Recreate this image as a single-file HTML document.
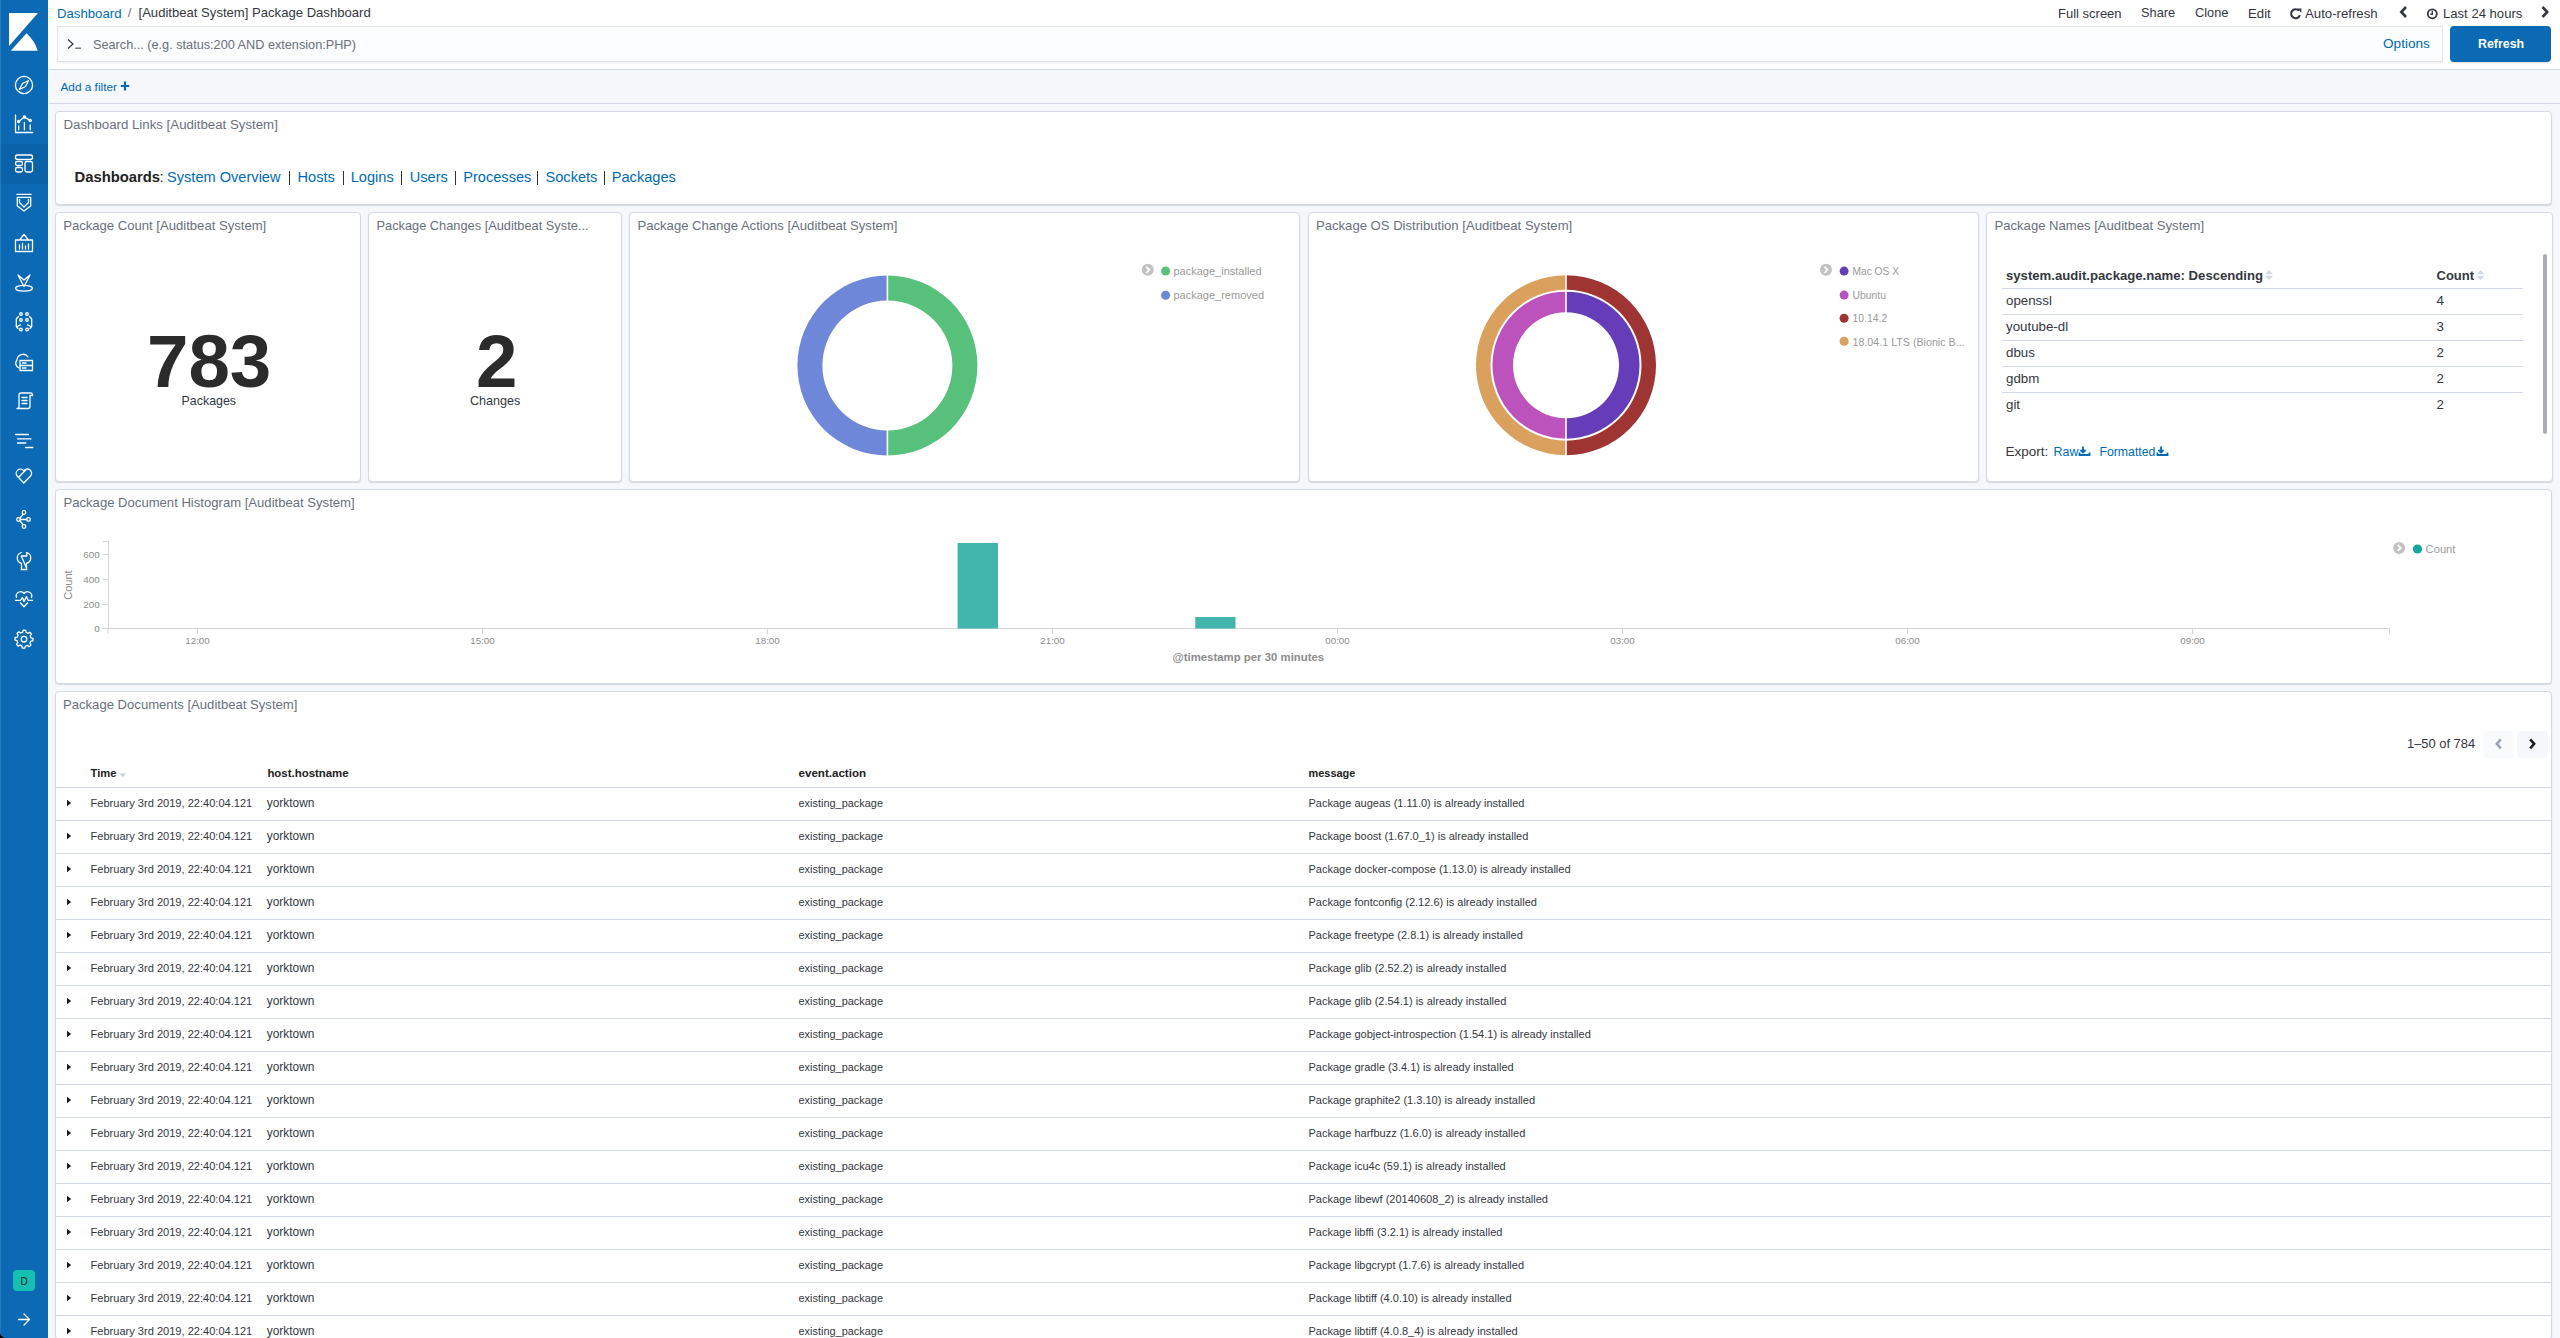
<!DOCTYPE html>
<html><head><meta charset="utf-8">
<style>
*{box-sizing:border-box;margin:0;padding:0}
html,body{width:2560px;height:1338px;overflow:hidden;background:#F5F7FA;font-family:"Liberation Sans",sans-serif;color:#343741}
.abs{position:absolute}
svg.abs{overflow:visible}
.t{position:absolute;white-space:nowrap;line-height:1}
</style></head><body>
<div class="abs" style="left:0;top:0;width:48px;height:1338px;background:#0B6AB3"></div>
<div class="abs" style="left:0px;top:144px;width:48px;height:40px;background:#0A62A8"></div>
<div class="abs" style="left:48px;top:0px;width:1px;height:1338px;background:#fff"></div>
<div class="abs" style="left:0px;top:0px;width:1px;height:1338px;background:rgba(255,255,255,.12)"></div>
<svg class="abs" style="left:0;top:0" width="48" height="60"><polygon points="9,13 38,13 9,46" fill="#fff"/><path d="M10.8,50.7 L26.5,33.2 Q35,41 37.7,50.7 Z" fill="#fff"/></svg>
<svg class="abs" style="left:0;top:0" width="48" height="700"><circle cx="24" cy="85" r="8.6" stroke="#fff" stroke-width="1.3" fill="none" stroke-linecap="round" stroke-linejoin="round"/><path d="M28.5,80.5 L25.5,86.5 L19.5,89.5 L22.5,83.5 Z" stroke="#fff" stroke-width="1.3" fill="none" stroke-linecap="round" stroke-linejoin="round"/><path d="M15.5,115 V132.5 H32.7" stroke="#fff" stroke-width="1.3" fill="none" stroke-linecap="round" stroke-linejoin="round"/><path d="M18.7,121.6 L24.4,117.1 L30.2,120.4" stroke="#fff" stroke-width="1.3" fill="none" stroke-linecap="round" stroke-linejoin="round"/><circle cx="18.7" cy="121.6" r="1.1" stroke="#fff" stroke-width="1.3" fill="none" stroke-linecap="round" stroke-linejoin="round"/><circle cx="24.4" cy="117.1" r="1.1" stroke="#fff" stroke-width="1.3" fill="none" stroke-linecap="round" stroke-linejoin="round"/><circle cx="30.2" cy="120.4" r="1.1" stroke="#fff" stroke-width="1.3" fill="none" stroke-linecap="round" stroke-linejoin="round"/><path d="M18.7,126 V129.8 M24.4,122.5 V129.8 M30.2,125 V129.8" stroke="#fff" stroke-width="1.3" fill="none" stroke-linecap="round" stroke-linejoin="round"/><rect x="15.5" y="155" width="17" height="4.5" rx="2" stroke="#fff" stroke-width="1.3" fill="none" stroke-linecap="round" stroke-linejoin="round"/><rect x="15.5" y="161.5" width="7" height="4" rx="1.8" stroke="#fff" stroke-width="1.3" fill="none" stroke-linecap="round" stroke-linejoin="round"/><rect x="15.5" y="167.5" width="7" height="4.5" rx="1.8" stroke="#fff" stroke-width="1.3" fill="none" stroke-linecap="round" stroke-linejoin="round"/><rect x="25" y="161.5" width="7.5" height="10.5" rx="1.8" stroke="#fff" stroke-width="1.3" fill="none" stroke-linecap="round" stroke-linejoin="round"/><path d="M17,194.4 H31 M17.3,197.3 H30.7 V206 L24,211 L17.3,206 Z M19.5,199.5 V202.5 L24,207 L28.5,202.5 V199.5" stroke="#fff" stroke-width="1.3" fill="none" stroke-linecap="round" stroke-linejoin="round"/><path d="M15.5,240 H32.5 V251.5 H15.5 Z M19.5,240 L24,234.5 L28.5,240" stroke="#fff" stroke-width="1.3" fill="none" stroke-linecap="round" stroke-linejoin="round"/><path d="M19.5,249 V245 M22.5,249 V243.5 M25.5,249 V246 M28.5,249 V244" stroke="#fff" stroke-width="1.3" fill="none" stroke-linecap="round" stroke-linejoin="round"/><ellipse cx="24" cy="288.3" rx="8.4" ry="2.9" stroke="#fff" stroke-width="1.3" fill="none" stroke-linecap="round" stroke-linejoin="round"/><path d="M18,275 L24,280 L30,275 L24,286.5 Z" fill="#0B6AB3" stroke="#fff" stroke-width="1.3" fill="none" stroke-linecap="round" stroke-linejoin="round"/><circle cx="21" cy="314" r="1.3" stroke="#fff" stroke-width="1.3" fill="none" stroke-linecap="round" stroke-linejoin="round"/><circle cx="27" cy="314" r="1.3" stroke="#fff" stroke-width="1.3" fill="none" stroke-linecap="round" stroke-linejoin="round"/><circle cx="21" cy="320" r="1.3" stroke="#fff" stroke-width="1.3" fill="none" stroke-linecap="round" stroke-linejoin="round"/><circle cx="27" cy="320" r="1.3" stroke="#fff" stroke-width="1.3" fill="none" stroke-linecap="round" stroke-linejoin="round"/><circle cx="21" cy="329.5" r="1.3" stroke="#fff" stroke-width="1.3" fill="none" stroke-linecap="round" stroke-linejoin="round"/><circle cx="27" cy="329.5" r="1.3" stroke="#fff" stroke-width="1.3" fill="none" stroke-linecap="round" stroke-linejoin="round"/><path d="M18.5,316.5 L16.3,319 V326.5 L18,328.5 M29.5,316.5 L31.7,319 V326.5 L30,328.5 M16.5,327 L20.5,324.8 M31.5,327 L27.5,324.8" stroke="#fff" stroke-width="1.3" fill="none" stroke-linecap="round" stroke-linejoin="round"/><path d="M19,368 A5,5 0 0 1 17,360 A6,6 0 0 1 28,357" stroke="#fff" stroke-width="1.3" fill="none" stroke-linecap="round" stroke-linejoin="round"/><rect x="20" y="360.5" width="12.5" height="10" stroke="#fff" stroke-width="1.3" fill="none" stroke-linecap="round" stroke-linejoin="round"/><path d="M20,365.5 H32.5 M22.5,363 H26 M22.5,368 H26" stroke="#fff" stroke-width="1.3" fill="none" stroke-linecap="round" stroke-linejoin="round"/><path d="M17,408.5 H28 A2,2 0 0 0 30,406.5 V395.5 H32.5 A2,2 0 0 0 30,393 H21 A2,2 0 0 0 19,395 V406 A2,2 0 0 1 17,408.5 Z M22,397.5 H27 M22,400.5 H27 M22,403.5 H27" stroke="#fff" stroke-width="1.3" fill="none" stroke-linecap="round" stroke-linejoin="round"/><path d="M15.5,434.5 H28.5 M17.5,438.8 H31 M17.5,443 H25.8 M25.5,447.5 H32.8" stroke="#fff" stroke-width="1.3" fill="none" stroke-linecap="round" stroke-linejoin="round"/><path d="M23.8,483 L17,475.8 A3.6,3.6 0 0 1 23.8,470.8 A3.6,3.6 0 0 1 30.8,475.8 Z M18.7,477.2 L26,469.8" stroke="#fff" stroke-width="1.3" fill="none" stroke-linecap="round" stroke-linejoin="round"/><circle cx="24" cy="512.5" r="1.8" stroke="#fff" stroke-width="1.3" fill="none" stroke-linecap="round" stroke-linejoin="round"/><circle cx="18.5" cy="519.5" r="1.8" stroke="#fff" stroke-width="1.3" fill="none" stroke-linecap="round" stroke-linejoin="round"/><circle cx="28.5" cy="519.5" r="1.8" stroke="#fff" stroke-width="1.3" fill="none" stroke-linecap="round" stroke-linejoin="round"/><circle cx="24" cy="526.5" r="1.8" stroke="#fff" stroke-width="1.3" fill="none" stroke-linecap="round" stroke-linejoin="round"/><path d="M20.3,519.5 H26.7 M23,514.5 L20,518 M20,521 L23,524.5" stroke="#fff" stroke-width="1.3" fill="none" stroke-linecap="round" stroke-linejoin="round"/><path d="M21.3,552.5 A5.6,5.6 0 0 0 21.5,563.3 V568 M26.5,568 V563.3 A5.6,5.6 0 0 0 26.7,552.5 V556 H21.3 Z M21,569.5 H27" stroke="#fff" stroke-width="1.3" fill="none" stroke-linecap="round" stroke-linejoin="round"/><path d="M16.5,597.5 A4.3,4.3 0 0 1 24,593.5 A4.3,4.3 0 0 1 31.5,597.5 M15.5,600.3 H20.5 L22.5,597.5 L24,601.5 L26.5,596.5 L28,600.3 H32.5 M20.5,603 L24,606.8 L27.5,603" stroke="#fff" stroke-width="1.3" fill="none" stroke-linecap="round" stroke-linejoin="round"/><polygon points="33.00,639.20 32.96,640.08 32.83,640.96 30.70,641.23 30.47,641.88 30.17,642.50 29.82,643.09 30.96,644.91 30.36,645.56 29.71,646.16 29.00,646.68 27.30,645.37 26.68,645.67 26.03,645.90 25.37,646.07 24.88,648.16 24.00,648.20 23.12,648.16 22.24,648.03 21.97,645.90 21.32,645.67 20.70,645.37 20.11,645.02 18.29,646.16 17.64,645.56 17.04,644.91 16.52,644.20 17.83,642.50 17.53,641.88 17.30,641.23 17.13,640.57 15.04,640.08 15.00,639.20 15.04,638.32 15.17,637.44 17.30,637.17 17.53,636.52 17.83,635.90 18.18,635.31 17.04,633.49 17.64,632.84 18.29,632.24 19.00,631.72 20.70,633.03 21.32,632.73 21.97,632.50 22.63,632.33 23.12,630.24 24.00,630.20 24.88,630.24 25.76,630.37 26.03,632.50 26.68,632.73 27.30,633.03 27.89,633.38 29.71,632.24 30.36,632.84 30.96,633.49 31.48,634.20 30.17,635.90 30.47,636.52 30.70,637.17 30.87,637.83 32.96,638.32" stroke="#fff" stroke-width="1.3" fill="none" stroke-linecap="round" stroke-linejoin="round"/><circle cx="24" cy="639.2" r="2.8" stroke="#fff" stroke-width="1.3" fill="none" stroke-linecap="round" stroke-linejoin="round"/></svg>
<div class="abs" style="left:13px;top:1270px;width:22px;height:21px;background:#16BFB0;border-radius:4px"></div>
<div class="t" style="left:20.50px;top:1277.24px;font-size:10px;color:#1a1c21;">D</div>
<svg class="abs" style="left:0;top:1300" width="48" height="30"><path d="M18.5,19.5 H29.5 M24,14 L29.5,19.5 L24,25" stroke="#fff" stroke-width="1.3" fill="none" stroke-linecap="round" stroke-linejoin="round"/></svg>
<svg class="abs" style="left:0;top:1332" width="6" height="6"><path d="M0,0 A6,6 0 0 0 6,6 H0 Z" fill="#000"/></svg>
<div class="abs" style="left:49px;top:0px;width:2511px;height:69px;background:#fff"></div>
<div class="abs" style="left:49px;top:69px;width:2511px;height:1px;background:#D3DAE6"></div>
<div class="t" style="left:57.00px;top:6.53px;font-size:13.2px;color:#006BB4;">Dashboard</div>
<div class="t" style="left:127.70px;top:6.20px;font-size:13px;color:#69707D;">/</div>
<div class="t" style="left:138.50px;top:6.11px;font-size:13.1px;color:#343741;">[Auditbeat System] Package Dashboard</div>
<div class="t" style="left:2058.00px;top:7.30px;font-size:13px;color:#343741;">Full screen</div>
<div class="t" style="left:2141.00px;top:7.46px;font-size:12.8px;color:#343741;">Share</div>
<div class="t" style="left:2195.00px;top:7.46px;font-size:12.8px;color:#343741;">Clone</div>
<div class="t" style="left:2248.00px;top:7.13px;font-size:13.2px;color:#343741;">Edit</div>
<div class="t" style="left:2305.00px;top:7.13px;font-size:13.2px;color:#343741;">Auto-refresh</div>
<div class="t" style="left:2443.00px;top:7.21px;font-size:13.1px;color:#343741;">Last 24 hours</div>
<svg class="abs" style="left:0;top:0" width="2560" height="30"><path d="M2299.9,15.2 A4.5,4.5 0 1 1 2298.9,10.6" stroke="#343741" stroke-width="2.1" fill="none"/><path d="M2297.2,8.6 L2301.4,8.6 L2301.4,12.8 Z" fill="#343741"/><path d="M2406,7 L2401.3,12 L2406,17" stroke="#343741" stroke-width="2.6" fill="none"/><circle cx="2432.3" cy="13.8" r="4.5" stroke="#343741" stroke-width="1.8" fill="none"/><path d="M2432.3,11 V14.3 H2430.3" stroke="#343741" stroke-width="1.4" fill="none"/><path d="M2542.5,7 L2547.2,12 L2542.5,17" stroke="#343741" stroke-width="2.6" fill="none"/></svg>
<div class="abs" style="left:57px;top:26px;width:2386px;height:36px;background:#FBFCFD;border:1px solid #E2E4E8;box-shadow:0 2px 2px -1px rgba(0,0,0,.08)"></div>
<svg class="abs" style="left:60;top:35" width="30" height="20"><path d="M8,4.5 L13,9 L8,13.5" stroke="#343741" stroke-width="1.2" fill="none"/><rect x="15.2" y="12.5" width="5.8" height="1.5" fill="#777"/></svg>
<div class="t" style="left:93.00px;top:38.95px;font-size:12.7px;color:#69707D;">Search... (e.g. status:200 AND extension:PHP)</div>
<div class="t" style="left:2383.00px;top:37.19px;font-size:13.6px;color:#006BB4;">Options</div>
<div class="abs" style="left:2450px;top:26px;width:101px;height:36px;background:#0B6AB3;border-radius:4px;box-shadow:0 2px 2px -1px rgba(0,0,0,.15)"></div>
<div class="t" style="left:2478.00px;top:38.20px;font-size:12.4px;color:#fff;font-weight:bold;">Refresh</div>
<div class="abs" style="left:49px;top:70px;width:2511px;height:33px;background:#F5F7FA"></div>
<div class="abs" style="left:49px;top:103px;width:2511px;height:1px;background:#D3DAE6"></div>
<div class="t" style="left:60.50px;top:81.71px;font-size:11.8px;color:#006BB4;">Add a filter</div>
<svg class="abs" style="left:120;top:80" width="12" height="12"><path d="M5,1.5 V10.5 M0.8,6 H9.2" stroke="#006BB4" stroke-width="2.2"/></svg>
<div class="abs" style="left:55px;top:111px;width:2497px;height:94px;background:#fff;border:1px solid #D3DAE6;border-radius:4px;box-shadow:0 1px 1px rgba(152,162,179,.35)"></div>
<div class="t" style="left:63.50px;top:118.18px;font-size:13.25px;color:#69707D;">Dashboard Links [Auditbeat System]</div>
<div class="t" style="left:74.50px;top:170.17px;font-size:14.8px;color:#222;font-weight:bold;">Dashboards</div>
<div class="t" style="left:159.50px;top:170.26px;font-size:14.7px;color:#222;">:</div>
<div class="t" style="left:167.00px;top:170.34px;font-size:14.6px;color:#006BB4;">System Overview</div>
<div class="t" style="left:297.50px;top:170.34px;font-size:14.6px;color:#006BB4;">Hosts</div>
<div class="t" style="left:350.75px;top:170.34px;font-size:14.6px;color:#006BB4;">Logins</div>
<div class="t" style="left:409.75px;top:170.34px;font-size:14.6px;color:#006BB4;">Users</div>
<div class="t" style="left:463.25px;top:170.34px;font-size:14.6px;color:#006BB4;">Processes</div>
<div class="t" style="left:545.50px;top:170.34px;font-size:14.6px;color:#006BB4;">Sockets</div>
<div class="t" style="left:611.75px;top:170.34px;font-size:14.6px;color:#006BB4;">Packages</div>
<div class="abs" style="left:288.5px;top:171px;width:1.3px;height:14px;background:#333"></div>
<div class="abs" style="left:342.5px;top:171px;width:1.3px;height:14px;background:#333"></div>
<div class="abs" style="left:401.0px;top:171px;width:1.3px;height:14px;background:#333"></div>
<div class="abs" style="left:454.5px;top:171px;width:1.3px;height:14px;background:#333"></div>
<div class="abs" style="left:537.0px;top:171px;width:1.3px;height:14px;background:#333"></div>
<div class="abs" style="left:603.5px;top:171px;width:1.3px;height:14px;background:#333"></div>
<div class="abs" style="left:55px;top:212px;width:306px;height:270px;background:#fff;border:1px solid #D3DAE6;border-radius:4px;box-shadow:0 1px 1px rgba(152,162,179,.35)"></div>
<div class="t" style="left:63.20px;top:219.01px;font-size:13.1px;color:#69707D;">Package Count [Auditbeat System]</div>
<div class="t" style="left:147.00px;top:324.94px;font-size:74.5px;color:#2B2B2B;font-weight:bold;">783</div>
<div class="t" style="left:181.60px;top:395.00px;font-size:12.4px;color:#343741;">Packages</div>
<div class="abs" style="left:368px;top:212px;width:254px;height:270px;background:#fff;border:1px solid #D3DAE6;border-radius:4px;box-shadow:0 1px 1px rgba(152,162,179,.35)"></div>
<div class="t" style="left:376.50px;top:219.76px;font-size:12.8px;color:#69707D;">Package Changes [Auditbeat Syste...</div>
<div class="t" style="left:476.00px;top:324.94px;font-size:74.5px;color:#2B2B2B;font-weight:bold;">2</div>
<div class="t" style="left:470.00px;top:394.83px;font-size:12.6px;color:#343741;">Changes</div>
<div class="abs" style="left:629px;top:212px;width:671px;height:270px;background:#fff;border:1px solid #D3DAE6;border-radius:4px;box-shadow:0 1px 1px rgba(152,162,179,.35)"></div>
<div class="t" style="left:637.50px;top:219.01px;font-size:13.1px;color:#69707D;">Package Change Actions [Auditbeat System]</div>
<div class="abs" style="left:1308px;top:212px;width:671px;height:270px;background:#fff;border:1px solid #D3DAE6;border-radius:4px;box-shadow:0 1px 1px rgba(152,162,179,.35)"></div>
<div class="t" style="left:1316.00px;top:219.01px;font-size:13.1px;color:#69707D;">Package OS Distribution [Auditbeat System]</div>
<div class="abs" style="left:1986px;top:212px;width:567px;height:270px;background:#fff;border:1px solid #D3DAE6;border-radius:4px;box-shadow:0 1px 1px rgba(152,162,179,.35)"></div>
<div class="t" style="left:1994.50px;top:219.01px;font-size:13.1px;color:#69707D;">Package Names [Auditbeat System]</div>
<div class="abs" style="left:55px;top:489px;width:2497px;height:195px;background:#fff;border:1px solid #D3DAE6;border-radius:4px;box-shadow:0 1px 1px rgba(152,162,179,.35)"></div>
<div class="t" style="left:63.50px;top:496.31px;font-size:13.1px;color:#69707D;">Package Document Histogram [Auditbeat System]</div>
<div class="abs" style="left:55px;top:691px;width:2497px;height:649px;background:#fff;border:1px solid #D3DAE6;border-radius:4px;box-shadow:0 1px 1px rgba(152,162,179,.35)"></div>
<div class="t" style="left:63.00px;top:697.81px;font-size:13.1px;color:#69707D;">Package Documents [Auditbeat System]</div>
<svg class="abs" style="left:0;top:0" width="2560" height="500"><path d="M887.40,275.50 A90,90 0 0 1 887.40,455.50 L887.40,430.50 A65,65 0 0 0 887.40,300.50 Z" fill="#57c17b"/><path d="M887.40,455.50 A90,90 0 0 1 887.40,275.50 L887.40,300.50 A65,65 0 0 0 887.40,430.50 Z" fill="#6f87d8"/><rect x="886.6" y="273.5" width="1.6" height="184" fill="#fff"/><path d="M1566.00,275.20 A90,90 0 0 1 1566.00,455.20 L1566.00,440.70 A75.5,75.5 0 0 0 1566.00,289.70 Z" fill="#9e3533"/><path d="M1566.00,455.20 A90,90 0 0 1 1566.00,275.20 L1566.00,289.70 A75.5,75.5 0 0 0 1566.00,440.70 Z" fill="#daa05d"/><path d="M1566.00,291.70 A73.5,73.5 0 0 1 1566.00,438.70 L1566.00,418.20 A53,53 0 0 0 1566.00,312.20 Z" fill="#663db8"/><path d="M1566.00,438.70 A73.5,73.5 0 0 1 1566.00,291.70 L1566.00,312.20 A53,53 0 0 0 1566.00,418.20 Z" fill="#bc52bc"/><rect x="1565.2" y="273.2" width="1.6" height="184" fill="#fff"/><circle cx="1147.75" cy="269.8" r="6" fill="#C2C2C2"/><path d="M1146.15,266.8 L1149.35,269.8 L1146.15,272.8" stroke="#fff" stroke-width="1.8" fill="none"/><circle cx="1165.6" cy="271" r="4.5" fill="#57c17b"/><circle cx="1165.6" cy="295.2" r="4.5" fill="#6f87d8"/><circle cx="1826" cy="269.8" r="6" fill="#C2C2C2"/><path d="M1824.4,266.8 L1827.6,269.8 L1824.4,272.8" stroke="#fff" stroke-width="1.8" fill="none"/><circle cx="1844.1" cy="271.1" r="4.5" fill="#663db8"/><circle cx="1844.1" cy="295.1" r="4.5" fill="#bc52bc"/><circle cx="1844.1" cy="318.2" r="4.5" fill="#9e3533"/><circle cx="1844.1" cy="341.2" r="4.5" fill="#daa05d"/></svg>
<div class="t" style="left:1173.50px;top:266.09px;font-size:11px;color:#9a9a9a;">package_installed</div>
<div class="t" style="left:1173.50px;top:290.09px;font-size:11px;color:#9a9a9a;">package_removed</div>
<div class="t" style="left:1852.50px;top:266.87px;font-size:10.2px;color:#9a9a9a;">Mac OS X</div>
<div class="t" style="left:1852.50px;top:290.80px;font-size:10.4px;color:#9a9a9a;">Ubuntu</div>
<div class="t" style="left:1852.50px;top:313.90px;font-size:10.4px;color:#9a9a9a;">10.14.2</div>
<div class="t" style="left:1852.50px;top:336.64px;font-size:10.7px;color:#9a9a9a;">18.04.1 LTS (Bionic B...</div>
<div class="t" style="left:2006.00px;top:268.77px;font-size:13.15px;color:#343741;font-weight:bold;">system.audit.package.name: Descending</div>
<div class="t" style="left:2436.50px;top:268.90px;font-size:13.0px;color:#343741;font-weight:bold;">Count</div>
<svg class="abs" style="left:0;top:0" width="2560" height="500"><path d="M2265,274.2 L2269,270 L2273,274.2 Z M2265,275.8 L2269,280 L2273,275.8 Z" fill="#D3DAE6"/><path d="M2476.5,274.2 L2480.5,270 L2484.5,274.2 Z M2476.5,275.8 L2480.5,280 L2484.5,275.8 Z" fill="#D3DAE6"/></svg>
<div class="abs" style="left:2002px;top:288px;width:521px;height:1px;background:#D3DAE6"></div>
<div class="abs" style="left:2002px;top:314px;width:521px;height:1px;background:#D3DAE6"></div>
<div class="abs" style="left:2002px;top:340px;width:521px;height:1px;background:#D3DAE6"></div>
<div class="abs" style="left:2002px;top:366px;width:521px;height:1px;background:#D3DAE6"></div>
<div class="abs" style="left:2002px;top:392px;width:521px;height:1px;background:#D3DAE6"></div>
<div class="t" style="left:2006.00px;top:294.44px;font-size:13.3px;color:#343741;">openssl</div>
<div class="t" style="left:2436.50px;top:294.44px;font-size:13.3px;color:#343741;">4</div>
<div class="t" style="left:2006.00px;top:320.44px;font-size:13.3px;color:#343741;">youtube-dl</div>
<div class="t" style="left:2436.50px;top:320.44px;font-size:13.3px;color:#343741;">3</div>
<div class="t" style="left:2006.00px;top:346.44px;font-size:13.3px;color:#343741;">dbus</div>
<div class="t" style="left:2436.50px;top:346.44px;font-size:13.3px;color:#343741;">2</div>
<div class="t" style="left:2006.00px;top:372.44px;font-size:13.3px;color:#343741;">gdbm</div>
<div class="t" style="left:2436.50px;top:372.44px;font-size:13.3px;color:#343741;">2</div>
<div class="t" style="left:2006.00px;top:398.44px;font-size:13.3px;color:#343741;">git</div>
<div class="t" style="left:2436.50px;top:398.44px;font-size:13.3px;color:#343741;">2</div>
<div class="abs" style="left:2543px;top:254px;width:4px;height:180px;background:#A9AEB8;border-radius:2px"></div>
<div class="t" style="left:2005.60px;top:445.07px;font-size:13.5px;color:#343741;">Export:</div>
<div class="t" style="left:2053.60px;top:446.00px;font-size:12.4px;color:#006BB4;">Raw</div>
<div class="t" style="left:2099.40px;top:446.09px;font-size:12.3px;color:#006BB4;">Formatted</div>
<svg class="abs" style="left:0;top:0" width="2560" height="500"><path d="M2083.0,446.5 V452.0 M2080.5,450.0 L2083.0,452.5 L2085.5,450.0" stroke="#006BB4" stroke-width="1.8" fill="none"/><path d="M2079.5,452.5 V455.0 H2089.5 V452.5" stroke="#006BB4" stroke-width="1.8" fill="none"/><path d="M2161.0,446.5 V452.0 M2158.5,450.0 L2161.0,452.5 L2163.5,450.0" stroke="#006BB4" stroke-width="1.8" fill="none"/><path d="M2157.5,452.5 V455.0 H2167.5 V452.5" stroke="#006BB4" stroke-width="1.8" fill="none"/></svg>
<svg class="abs" style="left:0;top:0" width="2560" height="700"><path d="M103,541.5 H108.5 V628.5 H2389.5 V634 M103,554.5 H108.5 M103,579.5 H108.5 M103,604.5 H108.5 M103,628.5 H108.5 M108,628.5 V634" stroke="#D6D6D6" stroke-width="1" fill="none"/><path d="M197.5,628.5 V634" stroke="#D6D6D6" stroke-width="1"/><path d="M482.5,628.5 V634" stroke="#D6D6D6" stroke-width="1"/><path d="M767.5,628.5 V634" stroke="#D6D6D6" stroke-width="1"/><path d="M1052.5,628.5 V634" stroke="#D6D6D6" stroke-width="1"/><path d="M1337.5,628.5 V634" stroke="#D6D6D6" stroke-width="1"/><path d="M1622.5,628.5 V634" stroke="#D6D6D6" stroke-width="1"/><path d="M1907.5,628.5 V634" stroke="#D6D6D6" stroke-width="1"/><path d="M2192.5,628.5 V634" stroke="#D6D6D6" stroke-width="1"/><rect x="957.6" y="543" width="40.4" height="85.5" fill="#42B5AD"/><rect x="1195.3" y="617" width="40.2" height="11.5" fill="#42B5AD"/><circle cx="2399.2" cy="547.9" r="6" fill="#C2C2C2"/><path d="M2397.6,544.9 L2400.7999999999997,547.9 L2397.6,550.9" stroke="#fff" stroke-width="1.8" fill="none"/><circle cx="2417.5" cy="549" r="4.6" fill="#16A69B"/></svg>
<div class="t" style="right:2460.2px;top:550.02px;font-size:9.9px;color:#8c8c8c">600</div>
<div class="t" style="right:2460.2px;top:575.02px;font-size:9.9px;color:#8c8c8c">400</div>
<div class="t" style="right:2460.2px;top:599.92px;font-size:9.9px;color:#8c8c8c">200</div>
<div class="t" style="right:2460.2px;top:624.12px;font-size:9.9px;color:#8c8c8c">0</div>
<div class="t" style="left:157.5px;width:80px;text-align:center;top:636.20px;font-size:9.8px;color:#8c8c8c">12:00</div>
<div class="t" style="left:442.5px;width:80px;text-align:center;top:636.20px;font-size:9.8px;color:#8c8c8c">15:00</div>
<div class="t" style="left:727.5px;width:80px;text-align:center;top:636.20px;font-size:9.8px;color:#8c8c8c">18:00</div>
<div class="t" style="left:1012.5px;width:80px;text-align:center;top:636.20px;font-size:9.8px;color:#8c8c8c">21:00</div>
<div class="t" style="left:1297.5px;width:80px;text-align:center;top:636.20px;font-size:9.8px;color:#8c8c8c">00:00</div>
<div class="t" style="left:1582.5px;width:80px;text-align:center;top:636.20px;font-size:9.8px;color:#8c8c8c">03:00</div>
<div class="t" style="left:1867.5px;width:80px;text-align:center;top:636.20px;font-size:9.8px;color:#8c8c8c">06:00</div>
<div class="t" style="left:2152.5px;width:80px;text-align:center;top:636.20px;font-size:9.8px;color:#8c8c8c">09:00</div>
<div class="t" style="left:28.599999999999994px;top:579.3px;width:80px;height:12px;text-align:center;font-size:11px;color:#8c8c8c;transform:rotate(-90deg)">Count</div>
<div class="t" style="left:1148.4px;width:200px;text-align:center;top:651.55px;font-size:11.4px;font-weight:bold;color:#8c8c8c">@timestamp per 30 minutes</div>
<div class="t" style="left:2425.60px;top:544.22px;font-size:11.2px;color:#9a9a9a;">Count</div>
<div class="t" style="left:2407.00px;top:737.78px;font-size:12.9px;color:#343741;">1–50 of 784</div>
<div class="abs" style="left:2483px;top:731px;width:31px;height:27px;background:#F5F7FA;border-radius:4px;opacity:.6"></div>
<div class="abs" style="left:2517px;top:731px;width:31px;height:27px;background:#F5F7FA;border-radius:4px"></div>
<svg class="abs" style="left:0;top:0" width="2560" height="900"><path d="M2500.8,739.3 L2496.8,743.8 L2500.8,748.3" stroke="#98A2B3" stroke-width="2.5" fill="none"/><path d="M2530.2,739.3 L2534.2,743.8 L2530.2,748.3" stroke="#1a1c21" stroke-width="2.5" fill="none"/><path d="M119.5,773.5 L126,773.5 L122.75,777 Z" fill="#C9CFD9"/></svg>
<div class="t" style="left:90.50px;top:768.22px;font-size:11.2px;color:#222;font-weight:bold;">Time</div>
<div class="t" style="left:267.40px;top:768.02px;font-size:11.43px;color:#222;font-weight:bold;">host.hostname</div>
<div class="t" style="left:798.50px;top:767.90px;font-size:11.58px;color:#222;font-weight:bold;">event.action</div>
<div class="t" style="left:1308.50px;top:768.43px;font-size:10.95px;color:#222;font-weight:bold;">message</div>
<div class="abs" style="left:56px;top:787px;width:2495px;height:1px;background:#D3DAE6"></div>
<div class="t" style="left:90.50px;top:798.23px;font-size:11.07px;color:#343741;">February 3rd 2019, 22:40:04.121</div>
<div class="t" style="left:266.80px;top:797.53px;font-size:11.9px;color:#343741;">yorktown</div>
<div class="t" style="left:798.50px;top:798.33px;font-size:10.95px;color:#343741;">existing_package</div>
<div class="t" style="left:1308.50px;top:798.27px;font-size:11.02px;color:#343741;">Package augeas (1.11.0) is already installed</div>
<div class="abs" style="left:56px;top:820px;width:2495px;height:1px;background:#D3DAE6"></div>
<div class="t" style="left:90.50px;top:831.23px;font-size:11.07px;color:#343741;">February 3rd 2019, 22:40:04.121</div>
<div class="t" style="left:266.80px;top:830.53px;font-size:11.9px;color:#343741;">yorktown</div>
<div class="t" style="left:798.50px;top:831.33px;font-size:10.95px;color:#343741;">existing_package</div>
<div class="t" style="left:1308.50px;top:831.27px;font-size:11.02px;color:#343741;">Package boost (1.67.0_1) is already installed</div>
<div class="abs" style="left:56px;top:853px;width:2495px;height:1px;background:#D3DAE6"></div>
<div class="t" style="left:90.50px;top:864.23px;font-size:11.07px;color:#343741;">February 3rd 2019, 22:40:04.121</div>
<div class="t" style="left:266.80px;top:863.53px;font-size:11.9px;color:#343741;">yorktown</div>
<div class="t" style="left:798.50px;top:864.33px;font-size:10.95px;color:#343741;">existing_package</div>
<div class="t" style="left:1308.50px;top:864.27px;font-size:11.02px;color:#343741;">Package docker-compose (1.13.0) is already installed</div>
<div class="abs" style="left:56px;top:886px;width:2495px;height:1px;background:#D3DAE6"></div>
<div class="t" style="left:90.50px;top:897.23px;font-size:11.07px;color:#343741;">February 3rd 2019, 22:40:04.121</div>
<div class="t" style="left:266.80px;top:896.53px;font-size:11.9px;color:#343741;">yorktown</div>
<div class="t" style="left:798.50px;top:897.33px;font-size:10.95px;color:#343741;">existing_package</div>
<div class="t" style="left:1308.50px;top:897.27px;font-size:11.02px;color:#343741;">Package fontconfig (2.12.6) is already installed</div>
<div class="abs" style="left:56px;top:919px;width:2495px;height:1px;background:#D3DAE6"></div>
<div class="t" style="left:90.50px;top:930.23px;font-size:11.07px;color:#343741;">February 3rd 2019, 22:40:04.121</div>
<div class="t" style="left:266.80px;top:929.53px;font-size:11.9px;color:#343741;">yorktown</div>
<div class="t" style="left:798.50px;top:930.33px;font-size:10.95px;color:#343741;">existing_package</div>
<div class="t" style="left:1308.50px;top:930.27px;font-size:11.02px;color:#343741;">Package freetype (2.8.1) is already installed</div>
<div class="abs" style="left:56px;top:952px;width:2495px;height:1px;background:#D3DAE6"></div>
<div class="t" style="left:90.50px;top:963.23px;font-size:11.07px;color:#343741;">February 3rd 2019, 22:40:04.121</div>
<div class="t" style="left:266.80px;top:962.53px;font-size:11.9px;color:#343741;">yorktown</div>
<div class="t" style="left:798.50px;top:963.33px;font-size:10.95px;color:#343741;">existing_package</div>
<div class="t" style="left:1308.50px;top:963.27px;font-size:11.02px;color:#343741;">Package glib (2.52.2) is already installed</div>
<div class="abs" style="left:56px;top:985px;width:2495px;height:1px;background:#D3DAE6"></div>
<div class="t" style="left:90.50px;top:996.23px;font-size:11.07px;color:#343741;">February 3rd 2019, 22:40:04.121</div>
<div class="t" style="left:266.80px;top:995.53px;font-size:11.9px;color:#343741;">yorktown</div>
<div class="t" style="left:798.50px;top:996.33px;font-size:10.95px;color:#343741;">existing_package</div>
<div class="t" style="left:1308.50px;top:996.27px;font-size:11.02px;color:#343741;">Package glib (2.54.1) is already installed</div>
<div class="abs" style="left:56px;top:1018px;width:2495px;height:1px;background:#D3DAE6"></div>
<div class="t" style="left:90.50px;top:1029.23px;font-size:11.07px;color:#343741;">February 3rd 2019, 22:40:04.121</div>
<div class="t" style="left:266.80px;top:1028.53px;font-size:11.9px;color:#343741;">yorktown</div>
<div class="t" style="left:798.50px;top:1029.33px;font-size:10.95px;color:#343741;">existing_package</div>
<div class="t" style="left:1308.50px;top:1029.27px;font-size:11.02px;color:#343741;">Package gobject-introspection (1.54.1) is already installed</div>
<div class="abs" style="left:56px;top:1051px;width:2495px;height:1px;background:#D3DAE6"></div>
<div class="t" style="left:90.50px;top:1062.23px;font-size:11.07px;color:#343741;">February 3rd 2019, 22:40:04.121</div>
<div class="t" style="left:266.80px;top:1061.53px;font-size:11.9px;color:#343741;">yorktown</div>
<div class="t" style="left:798.50px;top:1062.33px;font-size:10.95px;color:#343741;">existing_package</div>
<div class="t" style="left:1308.50px;top:1062.27px;font-size:11.02px;color:#343741;">Package gradle (3.4.1) is already installed</div>
<div class="abs" style="left:56px;top:1084px;width:2495px;height:1px;background:#D3DAE6"></div>
<div class="t" style="left:90.50px;top:1095.23px;font-size:11.07px;color:#343741;">February 3rd 2019, 22:40:04.121</div>
<div class="t" style="left:266.80px;top:1094.53px;font-size:11.9px;color:#343741;">yorktown</div>
<div class="t" style="left:798.50px;top:1095.33px;font-size:10.95px;color:#343741;">existing_package</div>
<div class="t" style="left:1308.50px;top:1095.27px;font-size:11.02px;color:#343741;">Package graphite2 (1.3.10) is already installed</div>
<div class="abs" style="left:56px;top:1117px;width:2495px;height:1px;background:#D3DAE6"></div>
<div class="t" style="left:90.50px;top:1128.23px;font-size:11.07px;color:#343741;">February 3rd 2019, 22:40:04.121</div>
<div class="t" style="left:266.80px;top:1127.53px;font-size:11.9px;color:#343741;">yorktown</div>
<div class="t" style="left:798.50px;top:1128.33px;font-size:10.95px;color:#343741;">existing_package</div>
<div class="t" style="left:1308.50px;top:1128.27px;font-size:11.02px;color:#343741;">Package harfbuzz (1.6.0) is already installed</div>
<div class="abs" style="left:56px;top:1150px;width:2495px;height:1px;background:#D3DAE6"></div>
<div class="t" style="left:90.50px;top:1161.23px;font-size:11.07px;color:#343741;">February 3rd 2019, 22:40:04.121</div>
<div class="t" style="left:266.80px;top:1160.53px;font-size:11.9px;color:#343741;">yorktown</div>
<div class="t" style="left:798.50px;top:1161.33px;font-size:10.95px;color:#343741;">existing_package</div>
<div class="t" style="left:1308.50px;top:1161.27px;font-size:11.02px;color:#343741;">Package icu4c (59.1) is already installed</div>
<div class="abs" style="left:56px;top:1183px;width:2495px;height:1px;background:#D3DAE6"></div>
<div class="t" style="left:90.50px;top:1194.23px;font-size:11.07px;color:#343741;">February 3rd 2019, 22:40:04.121</div>
<div class="t" style="left:266.80px;top:1193.53px;font-size:11.9px;color:#343741;">yorktown</div>
<div class="t" style="left:798.50px;top:1194.33px;font-size:10.95px;color:#343741;">existing_package</div>
<div class="t" style="left:1308.50px;top:1194.27px;font-size:11.02px;color:#343741;">Package libewf (20140608_2) is already installed</div>
<div class="abs" style="left:56px;top:1216px;width:2495px;height:1px;background:#D3DAE6"></div>
<div class="t" style="left:90.50px;top:1227.23px;font-size:11.07px;color:#343741;">February 3rd 2019, 22:40:04.121</div>
<div class="t" style="left:266.80px;top:1226.53px;font-size:11.9px;color:#343741;">yorktown</div>
<div class="t" style="left:798.50px;top:1227.33px;font-size:10.95px;color:#343741;">existing_package</div>
<div class="t" style="left:1308.50px;top:1227.27px;font-size:11.02px;color:#343741;">Package libffi (3.2.1) is already installed</div>
<div class="abs" style="left:56px;top:1249px;width:2495px;height:1px;background:#D3DAE6"></div>
<div class="t" style="left:90.50px;top:1260.23px;font-size:11.07px;color:#343741;">February 3rd 2019, 22:40:04.121</div>
<div class="t" style="left:266.80px;top:1259.53px;font-size:11.9px;color:#343741;">yorktown</div>
<div class="t" style="left:798.50px;top:1260.33px;font-size:10.95px;color:#343741;">existing_package</div>
<div class="t" style="left:1308.50px;top:1260.27px;font-size:11.02px;color:#343741;">Package libgcrypt (1.7.6) is already installed</div>
<div class="abs" style="left:56px;top:1282px;width:2495px;height:1px;background:#D3DAE6"></div>
<div class="t" style="left:90.50px;top:1293.23px;font-size:11.07px;color:#343741;">February 3rd 2019, 22:40:04.121</div>
<div class="t" style="left:266.80px;top:1292.53px;font-size:11.9px;color:#343741;">yorktown</div>
<div class="t" style="left:798.50px;top:1293.33px;font-size:10.95px;color:#343741;">existing_package</div>
<div class="t" style="left:1308.50px;top:1293.27px;font-size:11.02px;color:#343741;">Package libtiff (4.0.10) is already installed</div>
<div class="abs" style="left:56px;top:1315px;width:2495px;height:1px;background:#D3DAE6"></div>
<div class="t" style="left:90.50px;top:1326.23px;font-size:11.07px;color:#343741;">February 3rd 2019, 22:40:04.121</div>
<div class="t" style="left:266.80px;top:1325.53px;font-size:11.9px;color:#343741;">yorktown</div>
<div class="t" style="left:798.50px;top:1326.33px;font-size:10.95px;color:#343741;">existing_package</div>
<div class="t" style="left:1308.50px;top:1326.27px;font-size:11.02px;color:#343741;">Package libtiff (4.0.8_4) is already installed</div>
<div class="abs" style="left:56px;top:1348px;width:2495px;height:1px;background:#D3DAE6"></div>
<svg class="abs" style="left:0;top:0" width="2560" height="1338"><path d="M67,799.8 L71.2,803.05 L67,806.3 Z" fill="#1a1c21"/><path d="M67,832.8 L71.2,836.05 L67,839.3 Z" fill="#1a1c21"/><path d="M67,865.8 L71.2,869.05 L67,872.3 Z" fill="#1a1c21"/><path d="M67,898.8 L71.2,902.05 L67,905.3 Z" fill="#1a1c21"/><path d="M67,931.8 L71.2,935.05 L67,938.3 Z" fill="#1a1c21"/><path d="M67,964.8 L71.2,968.05 L67,971.3 Z" fill="#1a1c21"/><path d="M67,997.8 L71.2,1001.05 L67,1004.3 Z" fill="#1a1c21"/><path d="M67,1030.8 L71.2,1034.05 L67,1037.3 Z" fill="#1a1c21"/><path d="M67,1063.8 L71.2,1067.05 L67,1070.3 Z" fill="#1a1c21"/><path d="M67,1096.8 L71.2,1100.05 L67,1103.3 Z" fill="#1a1c21"/><path d="M67,1129.8 L71.2,1133.05 L67,1136.3 Z" fill="#1a1c21"/><path d="M67,1162.8 L71.2,1166.05 L67,1169.3 Z" fill="#1a1c21"/><path d="M67,1195.8 L71.2,1199.05 L67,1202.3 Z" fill="#1a1c21"/><path d="M67,1228.8 L71.2,1232.05 L67,1235.3 Z" fill="#1a1c21"/><path d="M67,1261.8 L71.2,1265.05 L67,1268.3 Z" fill="#1a1c21"/><path d="M67,1294.8 L71.2,1298.05 L67,1301.3 Z" fill="#1a1c21"/><path d="M67,1327.8 L71.2,1331.05 L67,1334.3 Z" fill="#1a1c21"/></svg>
</body></html>
